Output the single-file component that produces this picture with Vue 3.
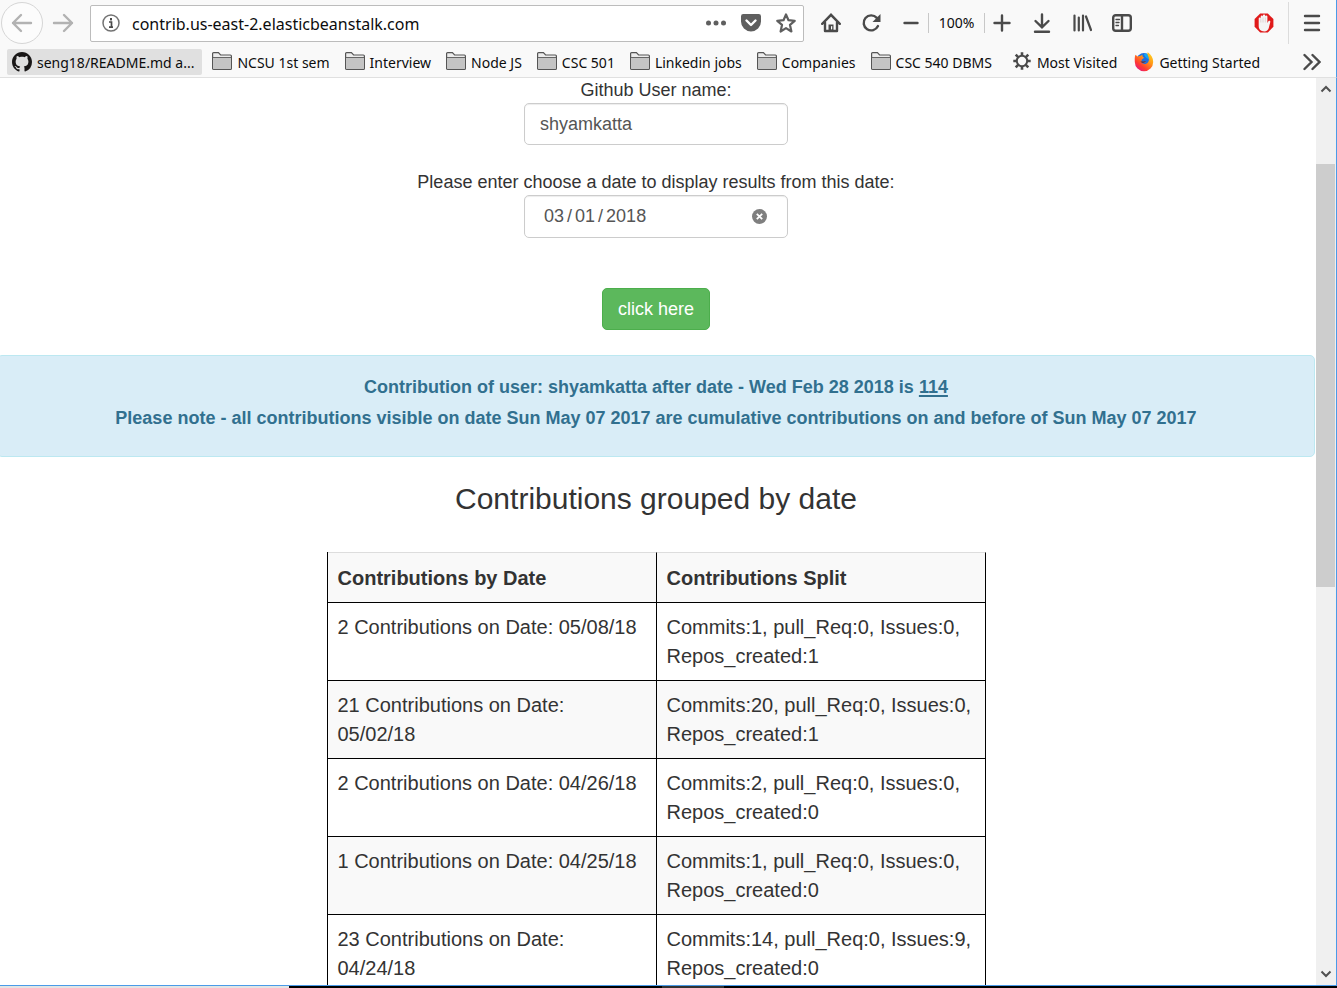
<script setup>
import { ref } from 'vue'

const address = ref('contrib.us-east-2.elasticbeanstalk.com')
const userName = ref('shyamkatta')
const fromDate = ref('2018-03-01')

const bookmarks = [
  { label: 'seng18/README.md a...', icon: 'github' },
  { label: 'NCSU 1st sem', icon: 'folder' },
  { label: 'Interview', icon: 'folder' },
  { label: 'Node JS', icon: 'folder' },
  { label: 'CSC 501', icon: 'folder' },
  { label: 'Linkedin jobs', icon: 'folder' },
  { label: 'Companies', icon: 'folder' },
  { label: 'CSC 540 DBMS', icon: 'folder' },
  { label: 'Most Visited', icon: 'gear' },
  { label: 'Getting Started', icon: 'firefox' },
]

const rows = [
  { date: '2 Contributions on Date: 05/08/18', split: 'Commits:1, pull_Req:0, Issues:0, Repos_created:1' },
  { date: '21 Contributions on Date: 05/02/18', split: 'Commits:20, pull_Req:0, Issues:0, Repos_created:1' },
  { date: '2 Contributions on Date: 04/26/18', split: 'Commits:2, pull_Req:0, Issues:0, Repos_created:0' },
  { date: '1 Contributions on Date: 04/25/18', split: 'Commits:1, pull_Req:0, Issues:0, Repos_created:0' },
  { date: '23 Contributions on Date: 04/24/18', split: 'Commits:14, pull_Req:0, Issues:9, Repos_created:0' },
]
</script>

<template>
  <div class="window">
    <header class="chrome">
      <nav class="toolbar" aria-label="Navigation">
        <button class="back" aria-label="Back">
          <svg width="22" height="20" viewBox="0 0 22 20" class="line faint"><path d="M20 10H2M10 2L2 10l8 8" /></svg>
        </button>
        <button class="forward" aria-label="Forward">
          <svg width="22" height="20" viewBox="0 0 22 20" class="line faint"><path d="M2 10h18M12 2l8 8-8 8" /></svg>
        </button>

        <div class="urlbar">
          <svg width="20" height="20" viewBox="0 0 20 20">
            <circle cx="10" cy="10" r="8" fill="none" stroke="#737373" stroke-width="1.5" />
            <rect x="9" y="5" width="2" height="2.4" fill="#4a4a4a" />
            <path d="M8 9h2.500v5M8 14.200h4" fill="none" stroke="#4a4a4a" stroke-width="1.700" />
          </svg>
          <input v-model="address" class="address" type="text" aria-label="Address" />
          <button aria-label="Page actions">
            <svg width="20" height="20" viewBox="0 0 20 20" fill="#5f5f5f">
              <circle cx="2.5" cy="10" r="2.5" /><circle cx="10" cy="10" r="2.5" /><circle cx="17.5" cy="10" r="2.5" />
            </svg>
          </button>
          <button aria-label="Save to Pocket">
            <svg width="20" height="20" viewBox="0 0 20 20">
              <path d="M2.3 1h15.4A2.3 2.3 0 0 1 20 3.300v5.200a10 10 0 0 1-20 0V3.300A2.300 2.300 0 0 1 2.300 1z" fill="#5f5f5f" />
              <path d="M5.500 7.500L10 12l4.500-4.500" fill="none" stroke="#fff" stroke-width="2.400" stroke-linecap="round" stroke-linejoin="round" />
            </svg>
          </button>
          <button aria-label="Bookmark this page">
            <svg width="20" height="20" viewBox="0 0 20 20">
              <path d="M10 1.500l2.500 5.700 6.200.6-4.700 4.100 1.400 6.600-5.400-3.400-5.400 3.400L6 11.900 1.300 7.800l6.200-.6z" fill="none" stroke="#5f5f5f" stroke-width="2.200" stroke-linejoin="round" />
            </svg>
          </button>
        </div>

        <div class="tools">
          <button aria-label="Home">
            <svg width="20" height="20" viewBox="0 0 20 20" class="line">
              <path d="M1.200 10.800L10 1.800l8.800 9" /><path d="M4 9.500V18h12V9.500" stroke-linejoin="round" />
              <path d="M7.500 18v-6.500h5V18z" fill="#4a4a4a" stroke="none" /><path d="M10.600 13.500v2.300" stroke="#fff" stroke-width="1.200" />
            </svg>
          </button>
          <button aria-label="Reload">
            <svg width="20" height="20" viewBox="0 0 20 20" class="line">
              <path d="M15.800 4.900A7.500 7.500 0 1 0 17 13" /><path d="M19.500 1v8h-8z" fill="#4a4a4a" stroke="none" />
            </svg>
          </button>
          <button aria-label="Zoom out">
            <svg width="20" height="20" viewBox="0 0 20 20" class="line"><path d="M3.500 10h13" /></svg>
          </button>
          <button class="zoom-level" aria-label="Reset zoom">100%</button>
          <button aria-label="Zoom in">
            <svg width="20" height="20" viewBox="0 0 20 20" class="line"><path d="M2.500 10h15M10 2.500v15" /></svg>
          </button>
          <button aria-label="Downloads">
            <svg width="20" height="20" viewBox="0 0 20 20" class="line"><path d="M10 1.500v12.500M3.500 8L10 14.300 16.500 8M3 18.800h14" /></svg>
          </button>
          <button aria-label="Library">
            <svg width="20" height="20" viewBox="0 0 20 20" class="line"><path d="M2.500 2.500v15M6.800 4.500v13M11 2.500v15M14 3.500l5 13.500" stroke-width="2.200" /></svg>
          </button>
          <button aria-label="Sidebars">
            <svg width="20" height="20" viewBox="0 0 20 20" class="line">
              <rect x="1.200" y="2.200" width="17.600" height="15.600" rx="2.500" /><path d="M10 2.500v15" />
              <path d="M4 6.500h3.500M4 9.500h3M4 12.500h2.500" stroke-width="1.300" />
            </svg>
          </button>
          <button class="blocker" aria-label="Ad blocker">
            <svg width="20" height="20" viewBox="0 0 20 20">
              <path d="M6.200.4h7.600l5.600 5.700v7.700l-5.600 5.800H6.200L.6 13.800V6.100z" fill="#e01a1a" />
              <path d="M4.700 11V5.500a1 1 0 0 1 2 0V3.600a1.100 1.100 0 0 1 2.200 0V2.700a1.150 1.150 0 0 1 2.300 0v.9a1.100 1.100 0 0 1 2.200 0v6.500l1-1.800c.6-.9 2.200-.5 1.900.7L14.700 15.300c-.6 2-2 3.200-4.400 3.200-3.400 0-5.600-2.100-5.600-5.200z" fill="#f4f4f4" />
              <path d="M6.800 5.500v4M9 4.500v5M11.300 4.500v5" stroke="#ccb5b5" stroke-width=".5" />
            </svg>
          </button>
          <button class="menu" aria-label="Open menu">
            <svg width="20" height="20" viewBox="0 0 20 20" class="line"><path d="M3 3h14M3 10h14M3 17h14" /></svg>
          </button>
        </div>
      </nav>

      <nav class="bookmarks" aria-label="Bookmarks">
        <a v-for="b in bookmarks" :key="b.label" href="#" class="bookmark" :class="b.icon">
          <svg v-if="b.icon === 'github'" width="20" height="20" viewBox="0 0 16 16">
            <path fill="#191717" d="M8 0C3.580 0 0 3.580 0 8c0 3.540 2.290 6.530 5.470 7.590.4.070.55-.17.55-.38 0-.19-.01-.82-.01-1.490-2.010.37-2.530-.49-2.690-.94-.09-.23-.48-.94-.82-1.130-.28-.15-.68-.52-.01-.53.63-.01 1.080.58 1.230.82.72 1.210 1.870.87 2.330.66.07-.52.28-.87.51-1.070-1.780-.2-3.640-.89-3.640-3.950 0-.87.31-1.590.82-2.150-.08-.2-.36-1.020.08-2.120 0 0 .67-.21 2.200.82.64-.18 1.320-.27 2-.27s1.360.09 2 .27c1.530-1.040 2.200-.82 2.200-.82.44 1.100.16 1.920.08 2.120.51.56.82 1.270.82 2.150 0 3.070-1.870 3.750-3.650 3.950.29.25.54.73.54 1.480 0 1.070-.01 1.930-.01 2.200 0 .21.15.46.55.38A8.010 8.010 0 0 0 16 8c0-4.420-3.580-8-8-8z" />
          </svg>
          <svg v-else-if="b.icon === 'folder'" width="20" height="20" viewBox="0 0 20 20">
            <path d="M.6 16.400V1.600Q.6.600 1.600.600h4.800L8.600 3h9.800q1 0 1 1v12.400q0 1-1 1H1.600q-1 0-1-1z" fill="#ececec" stroke="#555" stroke-width="1.200" />
            <path d="M1.200 6h17.600v10.800H1.200z" fill="#c4c4c4" /><path d="M1 5.500h18" stroke="#666" />
          </svg>
          <svg v-else-if="b.icon === 'gear'" width="20" height="20" viewBox="-1 0 20 20" fill="none" stroke="#4a4a4a">
            <circle cx="9" cy="9" r="5.200" stroke-width="2" />
            <path d="M9 .3v3.500M9 14.200v3.500M.3 9h3.500M14.200 9h3.500M2.700 2.700l2.700 2.700M12.600 12.600l2.700 2.700M2.700 15.300l2.700-2.700M12.600 5.400l2.700-2.700" stroke-width="2.600" />
          </svg>
          <svg v-else width="20" height="20" viewBox="0 0 20 20">
            <defs>
              <linearGradient id="flame" x1="1" y1="0" x2="0.200" y2="1">
                <stop offset="0" stop-color="#ffe226" /><stop offset=".4" stop-color="#ff9a16" />
                <stop offset=".75" stop-color="#ff3b30" /><stop offset="1" stop-color="#e31587" />
              </linearGradient>
            </defs>
            <circle cx="10" cy="8.500" r="7.500" fill="#1c6fe0" />
            <path d="M10 1.500c4 0 6 3 5 6-2-1-5-3-5-6z" fill="#12a8f0" />
            <path d="M1.500 2.800l2 1.800c.8-.6 1.800-.7 2.600-.6L8.500 2.800c-.3 1.300.2 2.400 1.700 2.900l-2 1.500c-.9.600-.9 1.500 0 2.100 1.300.8 2.600-.3 3.800.3-.8 1.700-2.700 2.100-4.300 1.500 1.800 1.600 5 1.300 6.400-.8 1.300-2.100 1-4.600 0-6.300-.9-1.500-1-2.800-.3-3.700 3.400 2.300 5.400 5.700 5.400 9.700a9.200 9.200 0 0 1-18.400 0C.7 7.500.5 4.800 1.500 2.800z" fill="url(#flame)" />
            <path d="M6.300 9.800c1.800 1.700 4.300 1.300 5.700-.3-1.200-.6-2.500.4-3.800-.3z" fill="#23356f" />
          </svg>
          <span>{{ b.label }}</span>
        </a>
        <button class="more" aria-label="More bookmarks">
          <svg width="18" height="18" viewBox="0 0 18 18" class="line"><path d="M1.500 2l7 7-7 7M9.500 2l7 7-7 7" /></svg>
        </button>
      </nav>
    </header>

    <div class="viewport">
      <main class="page">
        <form class="search" @submit.prevent>
          <label for="user">Github User name:</label>
          <input id="user" v-model="userName" class="field" type="text" />
          <label for="from" class="second">Please enter choose a date to display results from this date:</label>
          <div class="date">
            <input id="from" v-model="fromDate" class="field" type="date" />
            <button type="button" class="clear" aria-label="Clear date" @click="fromDate = ''">
              <svg width="15" height="15" viewBox="0 0 15 15">
                <circle cx="7.500" cy="7.500" r="7.500" fill="#7f7f7f" />
                <path d="M4.800 4.800l5.400 5.400M10.200 4.800l-5.400 5.400" stroke="#fff" stroke-width="1.800" />
              </svg>
            </button>
          </div>
          <button class="submit" type="submit">click here</button>
        </form>

        <section class="alert">
          <p>Contribution of user: shyamkatta after date - Wed Feb 28 2018 is <u>114</u></p>
          <p>Please note - all contributions visible on date Sun May 07 2017 are cumulative contributions on and before of Sun May 07 2017</p>
        </section>

        <h2>Contributions grouped by date</h2>

        <table>
          <thead>
            <tr><th scope="col">Contributions by Date</th><th scope="col">Contributions Split</th></tr>
          </thead>
          <tbody>
            <tr v-for="r in rows" :key="r.date"><td>{{ r.date }}</td><td>{{ r.split }}</td></tr>
          </tbody>
        </table>
      </main>

      <div class="scrollbar" aria-hidden="true">
        <svg width="12" height="8" viewBox="0 0 12 8" class="chevron"><path d="M1.500 6.500L6 2l4.500 4.500" /></svg>
        <div class="track"><div class="thumb"></div></div>
        <svg width="12" height="8" viewBox="0 0 12 8" class="chevron"><path d="M1.500 1.500L6 6l4.500-4.500" /></svg>
      </div>
    </div>
    <footer class="taskbar"><span class="light"></span><span class="dark"></span><span class="active"></span><span class="dark rest"></span></footer>
  </div>
</template>

<style>
html,
body {
  margin: 0;
  overflow: hidden;
}
</style>

<style scoped>
* {
  box-sizing: border-box;
}
.window {
  display: flex;
  flex-direction: column;
  height: 100vh;
  background: #fff;
  color: #333;
  font-family: "Liberation Sans", Arial, sans-serif;
}
button {
  flex: none;
  padding: 0;
  border: 0;
  background: none;
  font: inherit;
  color: inherit;
}
svg {
  display: block;
  flex: none;
}
.line {
  fill: none;
  stroke: #4a4a4a;
  stroke-width: 2.4;
  stroke-linecap: round;
}
.faint {
  stroke: #b2b2b2;
  stroke-linejoin: round;
}

.chrome {
  flex: none;
  border-right: 1px solid #4a9be8;
  border-bottom: 1px solid #e0e0e0;
  background: #f9f9f9;
  color: #0c0c0d;
  font-family: "Noto Sans", "Open Sans", sans-serif;
}
.toolbar {
  display: flex;
  align-items: center;
  height: 46px;
}
.back {
  display: grid;
  place-items: center;
  width: 42px;
  height: 42px;
  margin-left: 1px;
  border: 1px solid #d6d6d6;
  border-radius: 50%;
  background: #fcfcfc;
}
.forward {
  margin: 0 16px 0 9px;
}
.urlbar {
  display: flex;
  flex: 1;
  align-items: center;
  gap: 15px;
  height: 37px;
  padding: 0 7px 0 10px;
  border: 1px solid #bcbcbc;
  border-radius: 2px;
  background: #fff;
}
.address {
  flex: 1;
  min-width: 0;
  margin-left: -4px;
  padding: 2px 0 0;
  border: 0;
  outline: 0;
  background: none;
  color: #0c0c0d;
  font: 16px "Noto Sans", "Open Sans", sans-serif;
}
.tools {
  display: flex;
  align-items: center;
  gap: 20px;
  padding: 0 14px 0 17px;
}
.zoom-level {
  width: 57px;
  height: 20px;
  margin: 0 -13px;
  border: solid #c8c8c8;
  border-width: 0 1px;
  font-size: 14px;
  line-height: 20px;
}
.blocker {
  margin-left: 102px;
}
.menu {
  height: 42px;
  margin-left: -6px;
  padding-left: 13px;
  border-left: 1px solid #dcdcdc;
}

.bookmarks {
  display: flex;
  align-items: center;
  height: 31px;
  padding: 0 15px 0 7px;
}
.bookmark {
  display: flex;
  align-items: center;
  gap: 5px;
  height: 26px;
  margin-right: 15px;
  color: #0c0c0d;
  font-size: 14px;
  text-decoration: none;
  white-space: nowrap;
}
.bookmark span {
  padding-top: 2px;
}
.github {
  margin-right: 10px;
  padding: 0 8px 0 5px;
  border-radius: 2px;
  background: #e0e0e0;
}
.gear {
  margin: 0 17px 0 5px;
}
.more {
  margin-left: auto;
}

.viewport {
  display: flex;
  flex: 1;
  min-height: 0;
  border-right: 1px solid #4a9be8;
}
.page {
  flex: 1;
  overflow: hidden;
  padding: 0 4px 0 0;
}
.search {
  display: flex;
  flex-direction: column;
  align-items: center;
  font-size: 18px;
  line-height: 25px;
}
.second {
  margin-top: 25px;
}
.field {
  display: block;
  width: 264px;
  height: 42px;
  padding: 0 15px;
  border: 1px solid #ccc;
  border-radius: 5px;
  background: #fff;
  box-shadow: inset 0 1px 1px rgba(0, 0, 0, 0.075);
  color: #555;
  font: 18px "Liberation Sans", Arial, sans-serif;
}
.date {
  position: relative;
}
.date .field {
  height: 43px;
  padding-left: 18px;
}
.date .field::-webkit-calendar-picker-indicator {
  display: none;
}
.date .field::-webkit-datetime-edit-text {
  padding: 0 2px;
}
.clear {
  position: absolute;
  top: 14px;
  right: 21px;
}
.submit {
  height: 42px;
  margin: 50px 0 25px;
  padding: 0 15px;
  border: 1px solid #4cae4c;
  border-radius: 5px;
  background: #5cb85c;
  color: #fff;
}

.alert {
  margin: 0 -3px;
  padding: 19px;
  border: 1px solid #bce8f1;
  border-radius: 5px;
  background: #d9edf7;
  color: #31708f;
  font-size: 18px;
  font-weight: bold;
  line-height: 25px;
  text-align: center;
}
.alert p {
  margin: 0 0 6px;
}
.alert u {
  text-decoration-thickness: 2px;
  text-underline-offset: 2px;
  text-decoration-skip-ink: none;
}
h2 {
  margin: 25px 0 36px;
  font-size: 30px;
  font-weight: normal;
  line-height: 34px;
  text-align: center;
}
table {
  width: calc(50% + 3px);
  margin: 0 auto;
  border-spacing: 0;
  border-left: 1px solid #000;
  table-layout: fixed;
  font-size: 20px;
  line-height: 29px;
}
th,
td {
  padding: 10px 9px 9px 10px;
  border: solid #000;
  border-width: 0 1px 1px 0;
  text-align: left;
  vertical-align: top;
}
th {
  padding-top: 11px;
  border-top: 1px solid #ddd;
  background: #f9f9f9;
}
tbody tr:nth-child(even) {
  background: #f9f9f9;
}

.scrollbar {
  display: flex;
  flex: none;
  flex-direction: column;
  align-items: center;
  gap: 7px;
  width: 20px;
  padding: 7px 0;
  background: #f0f0f0;
}
.chevron {
  fill: none;
  stroke: #505050;
  stroke-width: 2;
}
.track {
  flex: 1;
  width: 100%;
  padding: 64px 1px 0 0;
}
.thumb {
  height: 53%;
  background: #cdcdcd;
}
.taskbar {
  display: flex;
  flex: none;
  height: 3px;
  border-top: 1px solid #4a9be8;
  background: #000;
}
.light {
  width: 289px;
  background: #e4e4e4;
}
.dark {
  width: 373px;
}
.active {
  width: 62px;
  background: #333;
}
.rest {
  flex: 1;
}
</style>
